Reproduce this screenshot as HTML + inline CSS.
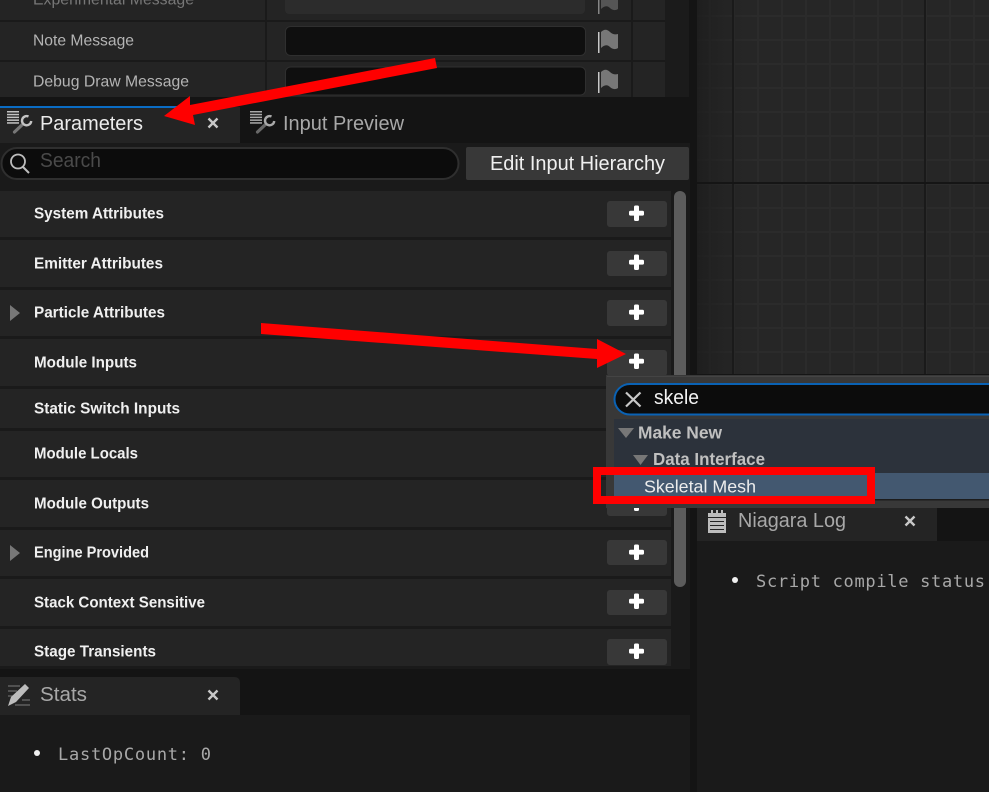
<!DOCTYPE html>
<html><head><meta charset="utf-8"><style>
html,body{margin:0;padding:0;background:#141414;width:989px;height:792px;overflow:hidden}
svg{display:block}
text{font-family:"Liberation Sans",sans-serif;white-space:pre}
.b{font-weight:bold;font-size:16px;fill:#f0f0f0}
.m{font-size:16px;fill:#b4b4b4}
.t{font-size:20px}
.c{font-family:"DejaVu Sans Mono","Liberation Mono",monospace;font-size:17px;fill:#a8a8a8}
</style></head><body>
<svg width="989" height="792" viewBox="0 0 989 792" xmlns="http://www.w3.org/2000/svg">
<defs>
<pattern id="g" x="-11" y="-9" width="24" height="24" patternUnits="userSpaceOnUse">
<rect width="24" height="24" fill="#262626"/><rect x="0" width="2" height="24" fill="#2b2b2b"/><rect y="0" width="24" height="2" fill="#2b2b2b"/>
</pattern>
<linearGradient id="fade" x1="0" x2="1" y1="0" y2="0"><stop offset="0" stop-color="#1c1c1c" stop-opacity=".8"/><stop offset="1" stop-color="#262626" stop-opacity="0"/></linearGradient>
<g id="flag"><rect x="598" y="1" width="1.500" height="21" fill="#c8c8c8"/><path d="M601 1 C604-2 607-2 610 1 C612 3 615 4 618 3 L618 17 C615 19 612 18 610 16 C607 13 604 14 601 17Z" fill="#777"/></g>
<g id="plus"><rect x="629" y="-2.200" width="15" height="4.800" rx="1.500" fill="#fff"/><rect x="634" y="-7.500" width="5" height="15.500" rx="1.500" fill="#fff"/></g>
<g id="wr"><g fill="#c4c4c4"><rect x="0" y="0" width="12" height="1.500"/><rect x="0" y="2.800" width="12" height="1.500"/><rect x="0" y="5.600" width="12" height="1.500"/><rect x="0" y="8.400" width="12" height="1.500"/><rect x="0" y="11.200" width="12" height="1.500"/></g><path d="M7.500 21 L16 13" stroke="#777" stroke-width="3.200" fill="none" stroke-linecap="round"/><path d="M21.500 5.500 A4.600 4.600 0 1 0 24.200 10" stroke="#c4c4c4" stroke-width="2.400" fill="none"/></g>
<path id="x" d="M-4.500 -4.500 L4.500 4.500 M4.500 -4.500 L-4.500 4.500" stroke="#c8c8c8" stroke-width="2.400" fill="none"/>
</defs>

<rect width="989" height="792" fill="#141414"/>

<!-- top details -->
<rect x="0" y="0" width="665" height="97" fill="#1a1a1a"/>
<rect x="665" y="0" width="24" height="97" fill="#1b1b1b"/>
<rect x="0" y="0" width="665" height="20" fill="#242424"/>
<rect x="0" y="22" width="665" height="38" fill="#242424"/>
<rect x="0" y="62" width="665" height="35" fill="#242424"/>
<rect x="265" y="0" width="2" height="97" fill="#1a1a1a"/>
<rect x="631" y="0" width="2" height="97" fill="#1a1a1a"/>
<text class="m" x="33" y="4.500" textLength="161" lengthAdjust="spacingAndGlyphs" style="fill:#777">Experimental Message</text>
<text class="m" x="33" y="45.500" textLength="101" lengthAdjust="spacingAndGlyphs">Note Message</text>
<text class="m" x="33" y="86.500" textLength="156" lengthAdjust="spacingAndGlyphs">Debug Draw Message</text>
<rect x="285" y="-10" width="300" height="24" rx="4" fill="#2c2c2c"/>
<rect x="285.500" y="26.500" width="300" height="29" rx="5" fill="#0f0f0f" stroke="#2f2f2f"/>
<rect x="285.500" y="67" width="300" height="28" rx="5" fill="#0f0f0f" stroke="#2f2f2f"/>
<use href="#flag" transform="translate(0,-8)" opacity=".6"/>
<use href="#flag" transform="translate(0,31)"/>
<use href="#flag" transform="translate(0,71)"/>

<!-- tabs -->
<rect x="0" y="107" width="240" height="36" fill="#242424"/>
<rect x="0" y="106" width="180" height="2" fill="#0a6cc4"/>
<use href="#wr" transform="translate(7,111)"/>
<text class="t" x="40" y="130" fill="#ececec" textLength="103" lengthAdjust="spacingAndGlyphs">Parameters</text>
<use href="#x" transform="translate(213,123)"/>
<use href="#wr" transform="translate(250,111)" opacity=".85"/>
<text class="t" x="283" y="130" fill="#a8a8a8" textLength="121" lengthAdjust="spacingAndGlyphs">Input Preview</text>

<!-- search bar -->
<rect x="0" y="143" width="690" height="48" fill="#1a1a1a"/>
<rect x="1.500" y="148" width="457" height="31" rx="15.500" fill="#0c0c0c" stroke="#2f2f2f" stroke-width="2"/>
<circle cx="18" cy="161.500" r="7" fill="none" stroke="#bdbdbd" stroke-width="1.800"/>
<path d="M23 167 L29 173" stroke="#bdbdbd" stroke-width="2"/>
<text class="t" x="40" y="167" fill="#4a4a4a" textLength="61" lengthAdjust="spacingAndGlyphs">Search</text>
<rect x="466" y="147" width="223" height="33" rx="2" fill="#383838"/>
<text class="t" x="490" y="170" fill="#f0f0f0" textLength="175" lengthAdjust="spacingAndGlyphs">Edit Input Hierarchy</text>

<!-- list rows -->
<rect x="0" y="188" width="690" height="481" fill="#1a1a1a"/>
<g fill="#242424">
<rect x="0" y="191" width="671" height="46"/>
<rect x="0" y="240" width="671" height="47"/>
<rect x="0" y="290" width="671" height="46"/>
<rect x="0" y="339" width="671" height="47"/>
<rect x="0" y="389" width="671" height="39"/>
<rect x="0" y="431" width="671" height="46"/>
<rect x="0" y="480" width="671" height="47"/>
<rect x="0" y="530" width="671" height="46"/>
<rect x="0" y="579" width="671" height="47"/>
<rect x="0" y="629" width="671" height="37"/>
</g>
<rect x="674" y="191" width="12" height="396" rx="6" fill="#5c5c5c"/>
<g class="lbl">
<text class="b" x="34" y="218.500" textLength="130" lengthAdjust="spacingAndGlyphs">System Attributes</text>
<text class="b" x="34" y="268.500" textLength="129" lengthAdjust="spacingAndGlyphs">Emitter Attributes</text>
<text class="b" x="34" y="317.500" textLength="131" lengthAdjust="spacingAndGlyphs">Particle Attributes</text>
<text class="b" x="34" y="367.500" textLength="103" lengthAdjust="spacingAndGlyphs">Module Inputs</text>
<text class="b" x="34" y="413.500" textLength="146" lengthAdjust="spacingAndGlyphs">Static Switch Inputs</text>
<text class="b" x="34" y="458.500" textLength="104" lengthAdjust="spacingAndGlyphs">Module Locals</text>
<text class="b" x="34" y="508.500" textLength="115" lengthAdjust="spacingAndGlyphs">Module Outputs</text>
<text class="b" x="34" y="557.500" textLength="115" lengthAdjust="spacingAndGlyphs">Engine Provided</text>
<text class="b" x="34" y="607.500" textLength="171" lengthAdjust="spacingAndGlyphs">Stack Context Sensitive</text>
<text class="b" x="34" y="656.500" textLength="122" lengthAdjust="spacingAndGlyphs">Stage Transients</text>
</g>
<path d="M10 305 L20 313 L10 321Z M10 545 L20 553 L10 561Z" fill="#777"/>
<g fill="#383838">
<rect x="607" y="201" width="60" height="26" rx="3"/>
<rect x="607" y="251" width="60" height="25" rx="3"/>
<rect x="607" y="300" width="60" height="26" rx="3"/>
<rect x="607" y="350" width="60" height="26" rx="3"/>
<rect x="607" y="490" width="60" height="26" rx="3"/>
<rect x="607" y="540" width="60" height="25" rx="3"/>
<rect x="607" y="590" width="60" height="25" rx="3"/>
<rect x="607" y="639" width="60" height="26" rx="3"/>
</g>
<use href="#plus" transform="translate(0,213)"/>
<use href="#plus" transform="translate(0,262)"/>
<use href="#plus" transform="translate(0,312)"/>
<use href="#plus" transform="translate(0,361)"/>
<use href="#plus" transform="translate(0,503)"/>
<use href="#plus" transform="translate(0,552)"/>
<use href="#plus" transform="translate(0,601)"/>
<use href="#plus" transform="translate(0,651)"/>

<!-- stats -->
<rect x="0" y="669" width="690" height="123" fill="#141414"/>
<path d="M0 677 H234 Q240 677 240 683 V715 H0Z" fill="#242424"/>
<rect x="0" y="715" width="690" height="77" fill="#1a1a1a"/>
<g stroke="#6a6a6a" stroke-width="1.200"><path d="M8 686 H20 M8 691 H17 M8 696 H13 M22 700 H30 M15 705 H30"/></g>
<path d="M8 706 L11 697 L25 684 L29 688 L16 702Z" fill="#bdbdbd"/>
<text class="t" x="40" y="701" fill="#a8a8a8" textLength="47" lengthAdjust="spacingAndGlyphs">Stats</text>
<use href="#x" transform="translate(213,695)"/>
<circle cx="37" cy="753" r="3" fill="#f0f0f0"/>
<text class="c" x="58" y="760" textLength="153" lengthAdjust="spacing">LastOpCount: 0</text>

<!-- graph -->
<rect x="690" y="0" width="7" height="792" fill="#141414"/>
<rect x="697" y="0" width="292" height="508" fill="url(#g)"/>
<rect x="697" y="0" width="60" height="508" fill="url(#fade)"/>
<rect x="732" y="0" width="2" height="508" fill="#1a1a1a"/>
<rect x="924" y="0" width="2" height="508" fill="#1a1a1a"/>
<rect x="697" y="182" width="292" height="2" fill="#151515"/>
<rect x="697" y="374" width="292" height="2" fill="#151515"/>

<!-- niagara log -->
<rect x="697" y="508" width="292" height="284" fill="#1a1a1a"/>
<rect x="937" y="508" width="52" height="33" fill="#141414"/>
<rect x="697" y="508" width="240" height="33" fill="#242424"/>
<rect x="708" y="513" width="18" height="20" fill="#bdbdbd"/>
<g fill="#242424"><rect x="708" y="517" width="18" height="1"/><rect x="710" y="521" width="14" height="1"/><rect x="710" y="525" width="14" height="1"/><rect x="710" y="529" width="14" height="1"/></g>
<path d="M711 510 h2 v4 h-2Z M716 510 h2 v4 h-2Z M721 510 h2 v4 h-2Z" fill="#bdbdbd"/>
<text class="t" x="738" y="527" fill="#a8a8a8" textLength="108" lengthAdjust="spacingAndGlyphs">Niagara Log</text>
<use href="#x" transform="translate(910,521)"/>
<circle cx="735" cy="580" r="3" fill="#f0f0f0"/>
<text class="c" x="756" y="587" textLength="229" lengthAdjust="spacing">Script compile status</text>

<!-- popup -->
<rect x="606" y="375" width="383" height="133" fill="#383838"/>
<rect x="607" y="376" width="382" height="1" fill="#444"/>
<path d="M995 384 H630 A15.500 15.250 0 0 0 630 414.500 H995Z" fill="#0c0c0c" stroke="#0a62b4" stroke-width="2"/>
<path d="M626 392.500 L640.500 406.500 M640.500 392.500 L626 406.500" stroke="#c8c8c8" stroke-width="2.200" fill="none"/>
<text x="654" y="404" font-size="20" fill="#f2f2f2" textLength="45" lengthAdjust="spacingAndGlyphs">skele</text>
<rect x="614" y="419" width="375" height="81" fill="#2c323b"/>
<rect x="614" y="473" width="375" height="26" fill="#435870"/>
<rect x="614" y="499" width="375" height="1.500" fill="#1c1c1c"/>
<path d="M618 428 H634 L626 438Z M633 455 H648 L640.500 465Z" fill="#777"/>
<text x="638" y="438.500" font-size="17.500" font-weight="bold" fill="#c0c0c0" textLength="84" lengthAdjust="spacingAndGlyphs">Make New</text>
<text x="653" y="465" font-size="17.500" font-weight="bold" fill="#c0c0c0" textLength="112" lengthAdjust="spacingAndGlyphs">Data Interface</text>
<text x="644" y="492.500" font-size="17.500" fill="#ececec" textLength="112" lengthAdjust="spacingAndGlyphs">Skeletal Mesh</text>

<!-- annotations -->
<rect x="597" y="471" width="274" height="29" fill="none" stroke="#ff0000" stroke-width="8"/>
<polygon points="435,58 437,68 193,115 195,125 164,116 190,96 190,105" fill="#ff0000"/>
<polygon points="261,323 597,349 597,339 626,354 597,368 597,359 261,334" fill="#ff0000"/>
</svg>
</body></html>
